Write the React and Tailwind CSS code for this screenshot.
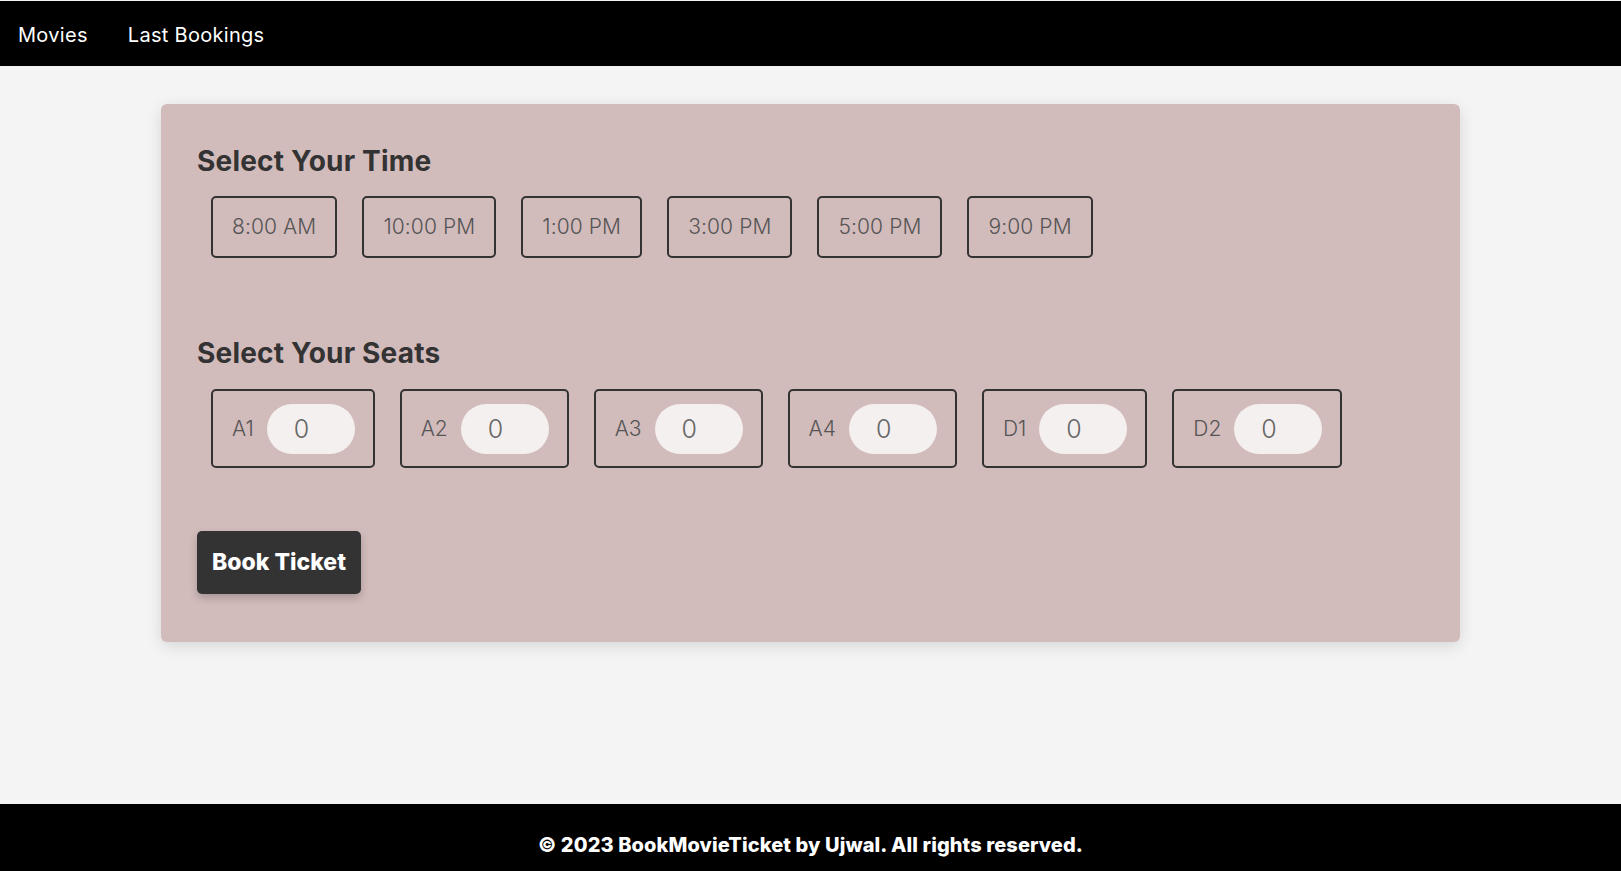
import { useState } from 'react';

const times = ['8:00 AM', '10:00 PM', '1:00 PM', '3:00 PM', '5:00 PM', '9:00 PM'];
const seats = ['A1', 'A2', 'A3', 'A4', 'D1', 'D2'];

export default function App() {
    const [time, setTime] = useState('');
    const [counts, setCounts] = useState({});

    return (
        <div className="min-h-screen flex flex-col bg-[#f4f4f4] pt-px" style={{ fontFamily: 'Inter, "Open Sans", sans-serif' }}>
            <nav className="h-[65px] bg-black flex items-center pt-[3px] px-[18px] gap-[40px] text-white text-[20px]">
                <a href="#" className="tracking-[0.3px]">Movies</a>
                <a href="#" className="tracking-[0.3px]">Last Bookings</a>
            </nav>

            <main className="flex-1">
                <div className="w-[1299px] mx-auto mt-[38px] bg-[#d2bbbb] rounded-md shadow-[0_4px_16px_rgba(0,0,0,0.12)] pl-[36px] pr-[38px] pt-[38px] pb-[48px]">
                    <h2 className="text-[28px] leading-[39px] font-bold text-[#333] tracking-[0.2px]">Select Your Time</h2>
                    <div className="flex gap-[25px] mt-[15px] ml-[14px]">
                        {times.map(t => (
                            <button
                                key={t}
                                onClick={() => setTime(t)}
                                className={"h-[62px] px-[19px] border-2 border-[#333] rounded-[5px] text-[21px] font-light text-[#555] tracking-[0.1px] " + (time === t ? 'bg-[#c4a9a9]' : '')}
                            >
                                {t}
                            </button>
                        ))}
                    </div>

                    <h2 className="text-[28px] leading-[39px] font-bold text-[#333] tracking-[0.2px] mt-[76px]">Select Your Seats</h2>
                    <div className="flex gap-[25px] mt-[16px] ml-[14px]">
                        {seats.map(s => (
                            <div key={s} className="h-[79px] border-2 border-[#333] rounded-[5px] flex items-center pl-[19px] pr-[18px] gap-[13px]">
                                <span className="text-[21px] font-light text-[#555]">{s}</span>
                                <input
                                    type="number"
                                    min="0"
                                    value={counts[s] ?? 0}
                                    onChange={e => setCounts({ ...counts, [s]: e.target.value })}
                                    className="w-[88px] h-[50px] rounded-full bg-[#f4f0ef] pl-[27px] text-[25px] font-light text-[#666] outline-none [appearance:textfield] [&::-webkit-inner-spin-button]:appearance-none"
                                />
                            </div>
                        ))}
                    </div>

                    <button className="mt-[63px] h-[63px] px-[15px] bg-[#333] text-white text-[23px] font-extrabold rounded-[5px] shadow-[0_4px_8px_rgba(0,0,0,0.2)]">
                        Book Ticket
                    </button>
                </div>
            </main>

            <footer className="h-[67px] bg-black flex items-center justify-center pt-[14px] text-white text-[20px] font-extrabold tracking-[0.1px]">
                © 2023 BookMovieTicket by Ujwal. All rights reserved.
            </footer>
        </div>
    );
}
